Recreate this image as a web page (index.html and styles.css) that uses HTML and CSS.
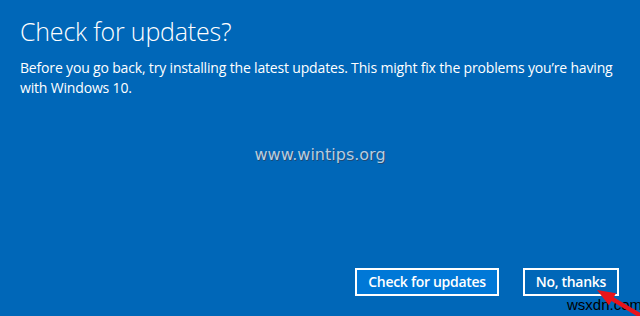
FILE: index.html
```html
<!DOCTYPE html>
<html>
<head>
<meta charset="utf-8">
<link rel="stylesheet" href="styles.css">
</head>
<body>
<div class="screen">
  <h1 class="title">Check for updates?</h1>
  <p class="desc">Before you go back, try installing the latest updates. This might fix the problems you’re having with Windows 10.</p>
  <div class="watermark">www.wintips.org</div>
  <div class="actions">
    <button class="btn btn-primary">Check for updates</button>
    <button class="btn">No, thanks</button>
  </div>
  <div class="credit">wsxdn.com</div>
  <svg class="arrow" width="56" height="36" viewBox="0 0 56 36">
    <polygon points="0,0 19.1,3.2 16.6,7.3 52.8,28.6 50.6,32.4 14.4,11.1 11.9,15.2" fill="#e8151b"/>
  </svg>
</div>
</body>
</html>
```

FILE: styles.css
```css
html, body {
  margin: 0;
  padding: 0;
}
body {
  background: #0067b8;
  width: 640px;
  height: 316px;
  overflow: hidden;
}
.screen {
  position: relative;
  width: 640px;
  height: 316px;
  box-sizing: border-box;
  padding: 15px 20px 0 20px;
  display: flex;
  flex-direction: column;
  font-family: "Open Sans", "Noto Sans", sans-serif;
  color: #ffffff;
  overflow: hidden;
}
.title {
  margin: 0;
  font-weight: 300;
  font-size: 25px;
  line-height: 32px;
  letter-spacing: -0.2px;
}
.desc {
  margin: 11px 0 0 0;
  font-size: 14px;
  line-height: 20px;
  letter-spacing: -0.17px;
  width: 600px;
}
.watermark {
  margin: 47px 0 0 0;
  align-self: center;
  font-family: "DejaVu Sans", Verdana, sans-serif;
  font-size: 16px;
  color: #b8cce0;
  text-shadow: 1px 1px 0 #1c4a77;
}
.actions {
  margin-top: auto;
  margin-bottom: 20px;
  display: flex;
  justify-content: flex-end;
  gap: 24px;
  margin-right: 1px;
}
.btn {
  font-family: "Open Sans", "Noto Sans", sans-serif;
  font-size: 14px;
  font-weight: 600;
  color: #ffffff;
  background: transparent;
  border: 2px solid #ffffff;
  height: 28px;
  padding: 0 11px;
  line-height: 22px;
  letter-spacing: -0.3px;
}
.btn-primary {
  background: #0078d7;
}
.credit {
  position: absolute;
  left: 567px;
  top: 296px;
  font-family: "Liberation Sans", Arial, sans-serif;
  font-size: 15px;
  line-height: 17px;
  color: #000;
}
.arrow {
  position: absolute;
  left: 597px;
  top: 290px;
}
```
